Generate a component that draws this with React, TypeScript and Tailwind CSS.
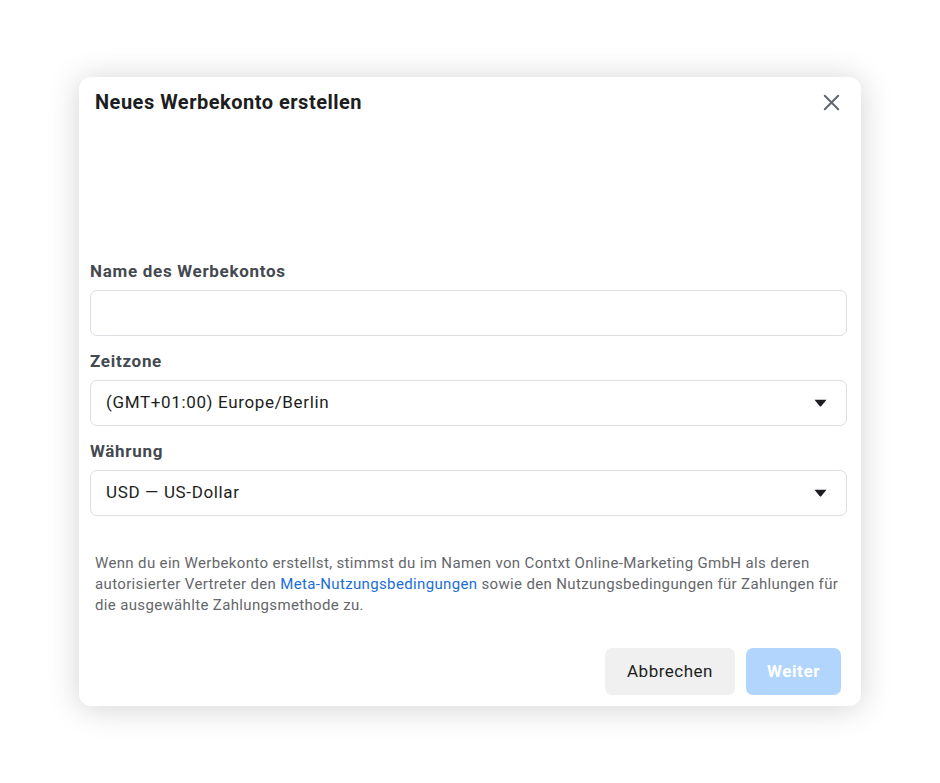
function Caret() {
  return (
    <svg width="13" height="8" viewBox="0 0 13 8" className="shrink-0">
      <path d="M0.5 0.8h12L7.4 6.9a1.2 1.2 0 0 1-1.8 0z" fill="#1c1e21" />
    </svg>
  );
}

function CloseIcon() {
  return (
    <svg width="17" height="17" viewBox="0 0 17 17" className="shrink-0">
      <path d="M1.8 1.8L15.2 15.2M15.2 1.8L1.8 15.2" stroke="#606770" strokeWidth="2" strokeLinecap="round" />
    </svg>
  );
}

function Field({ label, value, select }: { label: string; value?: string; select?: boolean }) {
  return (
    <div className="flex flex-col">
      <label className="text-[17px] leading-[20px] font-bold tracking-[0.7px] text-[#444950] mb-[9px]">{label}</label>
      <div className="h-[46px] rounded-[7px] border border-[#dadde1] bg-white flex items-center pl-[15px] pr-[19px]">
        <span className="flex-1 text-[17px] tracking-[0.65px] text-[#1c1e21]">{value}</span>
        {select && <Caret />}
      </div>
    </div>
  );
}

export default function App() {
  return (
    <div
      className="w-full h-[783px] bg-white flex items-center justify-center"
      style={{ fontFamily: 'Roboto, "Liberation Sans", sans-serif' }}
    >
      <div className="w-[782px] h-[629px] bg-white rounded-[12px] shadow-[0_2px_32px_rgba(0,0,0,0.18)] flex flex-col">
        {/* Kopfzeile */}
        <div className="flex items-center justify-between pl-[16px] pr-[21px] pt-[13px]">
          <h2 className="text-[20px] leading-[24px] font-bold tracking-[0.5px] text-[#1c1e21]">Neues Werbekonto erstellen</h2>
          <CloseIcon />
        </div>

        <div className="flex flex-col gap-[15px] pl-[11px] pr-[14px] mt-[147px]">
          <Field label="Name des Werbekontos" />
          <Field label="Zeitzone" value="(GMT+01:00) Europe/Berlin" select />
          <Field label="Währung" value="USD — US-Dollar" select />
        </div>

        <p className="pl-[16px] pr-[16px] mt-[37px] text-[15px] leading-[21px] tracking-[0.35px] text-[#65676b]">
          Wenn du ein Werbekonto erstellst, stimmst du im Namen von Contxt Online-Marketing GmbH als deren
          autorisierter Vertreter den <span className="text-[#1a6ed8]">Meta-Nutzungsbedingungen</span> sowie den
          Nutzungsbedingungen für Zahlungen für die ausgewählte Zahlungsmethode zu.
        </p>

        <div className="mt-auto flex justify-end gap-[11px] pr-[20px] pb-[11px]">
          <button className="h-[47px] w-[130px] rounded-[7px] bg-[#f0f0f0] text-[17px] tracking-[0.5px] text-[#1c1e21]">
            Abbrechen
          </button>
          <button className="h-[47px] w-[95px] rounded-[7px] bg-[#b2d5fd] text-[17px] font-bold tracking-[0.6px] text-white">
            Weiter
          </button>
        </div>
      </div>
    </div>
  );
}
